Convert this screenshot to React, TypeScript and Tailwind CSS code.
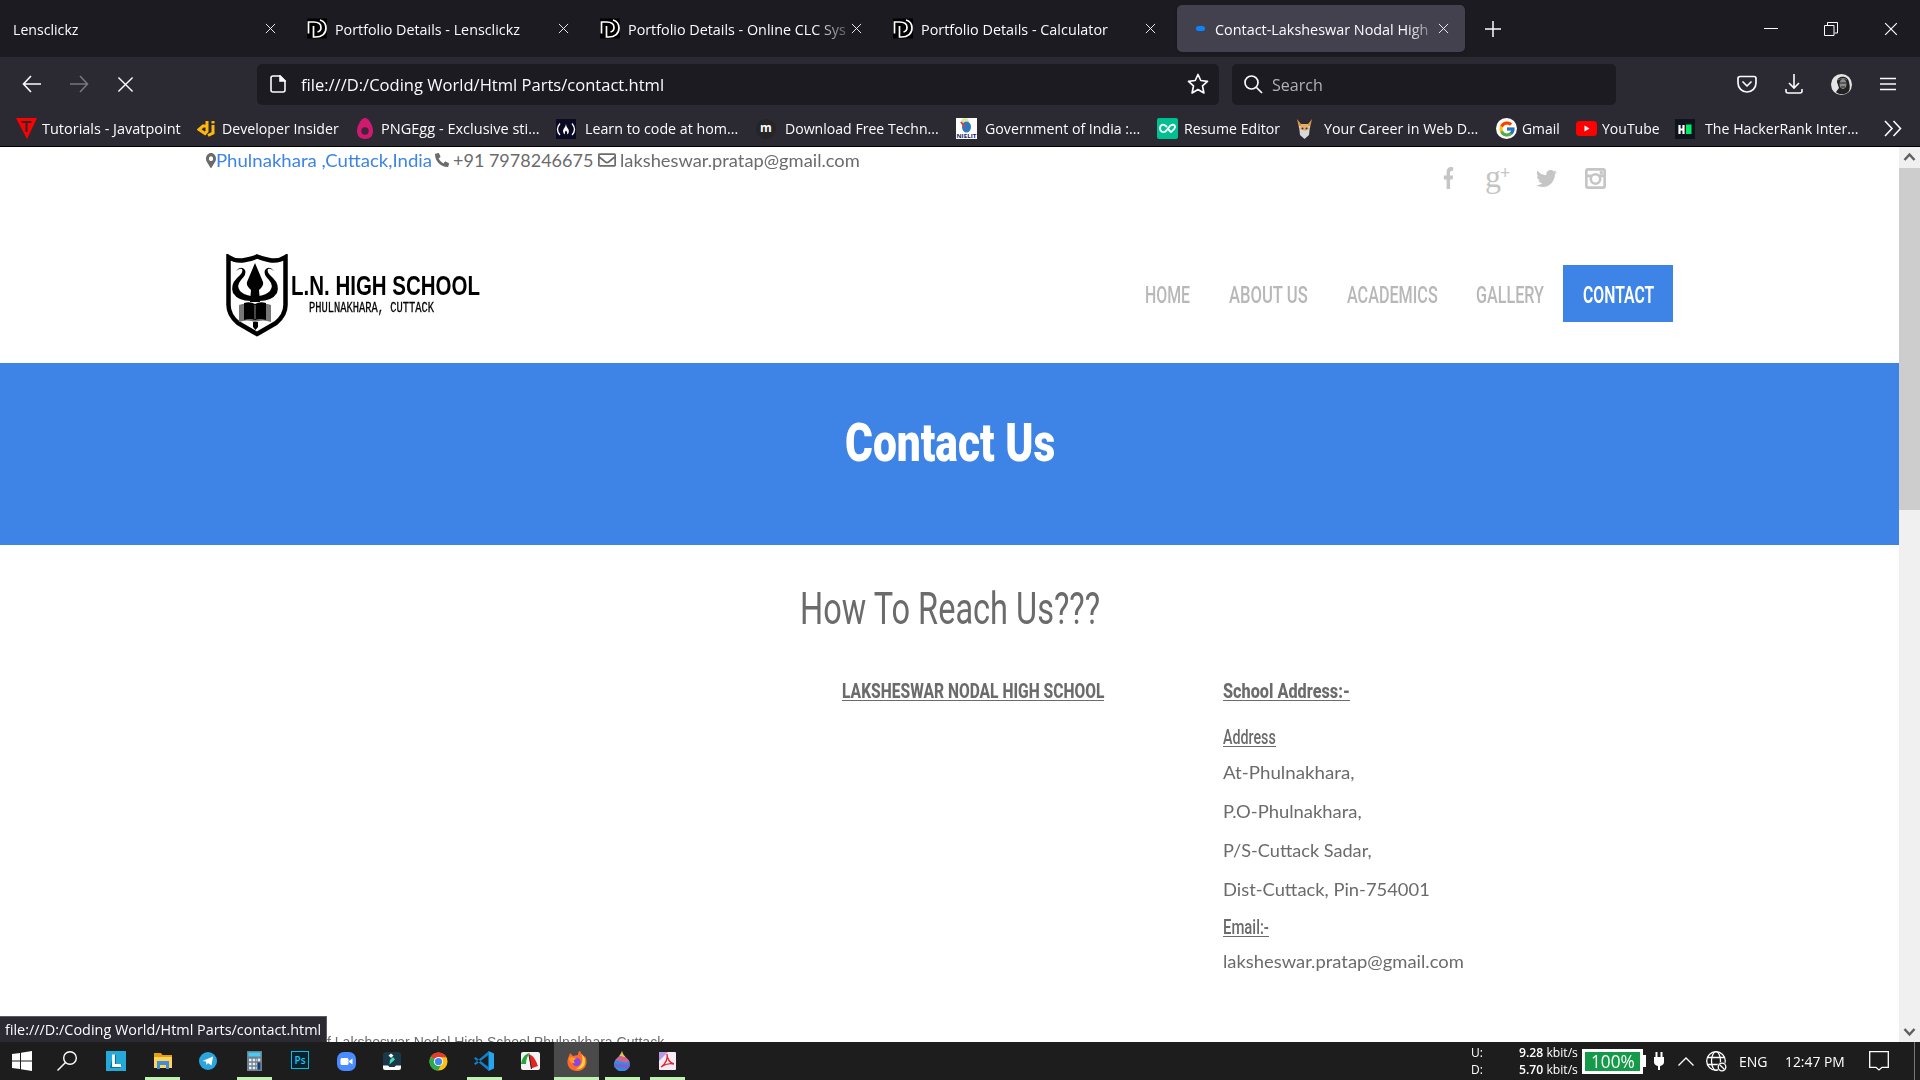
import React, { useLayoutEffect, useRef, useState } from "react";
import { FaMapMarkerAlt, FaPhoneAlt, FaRegEnvelope, FaFacebookF, FaTwitter } from "react-icons/fa";
import { FcGoogle } from "react-icons/fc";

/* Text squeezed or stretched horizontally to fill the width of its box. */
function Fit({ className, children }: { className: string; children: React.ReactNode }) {
  const outer = useRef<HTMLSpanElement>(null);
  const inner = useRef<HTMLSpanElement>(null);
  const [scale, setScale] = useState(1);
  useLayoutEffect(() => {
    if (outer.current && inner.current && inner.current.offsetWidth) {
      setScale(outer.current.clientWidth / inner.current.offsetWidth);
    }
  }, []);
  return (
    <span ref={outer} className={"block shrink-0 whitespace-nowrap " + className}>
      <span ref={inner} className="inline-block origin-left" style={{ transform: `scaleX(${scale})` }}>
        {children}
      </span>
    </span>
  );
}

type IconProps = { className?: string };

function Cross({ className }: IconProps) {
  return (
    <svg viewBox="0 0 12 12" className={"shrink-0 " + className} fill="none" stroke="currentColor">
      <path d="M1 1l10 10M11 1L1 11" />
    </svg>
  );
}

function PdIcon() {
  return (
    <svg viewBox="0 0 20 20" className="h-[21px] w-5 shrink-0" fill="none" stroke="#fff" strokeWidth="1.7">
      <rect width="20" height="20" fill="#000" stroke="none" />
      <path d="M1.500 15V3.500h5c5 0 7.500 2.300 7.500 5.500 0 2.500-1.500 4-3.500 4.500" />
      <path d="M6.500 7.500v11h2c6.500 0 10.500-3.500 10.500-9 0-4-2.500-7-6-8" />
    </svg>
  );
}

function TabStrip() {
  return (
    <div className="flex h-[57px] items-center bg-[#1c1b22] text-[#fbfbfe]">
      <div className="flex h-full w-[294px] items-center pl-[13px]">
        <Fit className="w-[65px] pt-px text-[15px]">Lensclickz</Fit>
        <Cross className="ml-[187px] h-[11px] w-[11px]" />
      </div>
      <div className="flex h-full w-[293px] items-center pl-[13px]">
        <PdIcon />
        <Fit className="ml-2 w-[185px] pt-px text-[15px]">Portfolio Details - Lensclickz</Fit>
        <Cross className="ml-[38px] h-[11px] w-[11px]" />
      </div>
      <div className="flex h-full w-[293px] items-center pl-[13px]">
        <PdIcon />
        <div className="ml-2 w-[218px] shrink-0 overflow-hidden [mask-image:linear-gradient(to_right,black_85%,transparent_106%)]">
          <Fit className="w-[218px] pt-px text-[15px]">Portfolio Details - Online CLC Sys</Fit>
        </div>
        <Cross className="ml-[5px] h-[11px] w-[11px]" />
      </div>
      <div className="flex h-full w-[297px] items-center pl-[13px]">
        <PdIcon />
        <Fit className="ml-2 w-[187px] pt-px text-[15px]">Portfolio Details - Calculator</Fit>
        <Cross className="ml-[37px] h-[11px] w-[11px]" />
      </div>
      <div className="flex h-[47px] w-[288px] items-center rounded-[5px] bg-[#42414d] pl-[19px] shadow">
        <span className="h-[5px] w-[9px] shrink-0 rounded-full bg-[#0a84ff]" />
        <div className="ml-[10px] w-[218px] shrink-0 overflow-hidden [mask-image:linear-gradient(to_right,black_88%,transparent_104%)]">
          <Fit className="w-[213px] pt-px text-[15px]">Contact-Laksheswar Nodal High</Fit>
        </div>
        <Cross className="ml-[5px] h-[11px] w-[11px]" />
      </div>
      <svg viewBox="0 0 16 16" className="ml-5 h-4 w-4" stroke="currentColor" strokeWidth="1.5">
        <path d="M8 0v16M0 8h16" />
      </svg>
      <svg viewBox="0 0 14 14" className="ml-[263px] h-[14px] w-[14px]" stroke="currentColor">
        <path d="M0 6.500h14" />
      </svg>
      <svg viewBox="0 0 14 14" className="ml-[46px] h-[14px] w-[14px]" stroke="currentColor" fill="none">
        <path d="M.5 3.500h9.500v10H.5zM3.500 3V.5h10V11H10.500" />
      </svg>
      <Cross className="ml-[46px] h-[14px] w-[14px]" />
    </div>
  );
}

function Toolbar() {
  return (
    <div className="flex h-[54px] items-center bg-[#2b2a33] pl-[22px] text-[#fbfbfe]">
      <svg viewBox="0 0 20 18" className="h-[18px] w-5" fill="none" stroke="currentColor" strokeWidth="1.6">
        <path d="M9 1L1.500 9 9 17M1.500 9H19" />
      </svg>
      <svg viewBox="0 0 20 18" className="ml-[27px] h-[18px] w-5 text-[#77767e]" fill="none" stroke="currentColor" strokeWidth="1.600">
        <path d="M11 1l7.500 8L11 17M18.500 9H1" />
      </svg>
      <Cross className="ml-[28px] h-[17px] w-[17px]" />
      <div className="ml-[123px] flex h-[41px] w-[962px] items-center rounded-[5px] bg-[#1c1b22] pl-[13px]">
        <svg viewBox="0 0 16 18" className="h-[18px] w-4" fill="none" stroke="currentColor" strokeWidth="1.600">
          <path d="M3 1h7l5 5v9a2 2 0 0 1-2 2H3a2 2 0 0 1-2-2V3a2 2 0 0 1 2-2z" />
          <path d="M10 1v5h5z" fill="currentColor" />
        </svg>
        <Fit className="ml-[15px] w-[363px] pt-0.5 text-[17px]">file:///D:/Coding World/Html Parts/contact.html</Fit>
        <svg viewBox="0 0 22 22" className="ml-[523px] h-[22px] w-[22px]" fill="none" stroke="currentColor" strokeWidth="1.700" strokeLinejoin="round">
          <path d="M11 1.500l2.800 6 6.700.8-5 4.500 1.400 7.200L11 16.500 5.100 20l1.400-7.200-5-4.500 6.700-.8z" />
        </svg>
      </div>
      <div className="ml-[13px] flex h-[41px] w-[384px] items-center rounded-[5px] bg-[#1c1b22] pl-3">
        <svg viewBox="0 0 19 19" className="h-[19px] w-[19px]" fill="none" stroke="currentColor" strokeWidth="1.700">
          <circle cx="7.500" cy="7.500" r="6.500" />
          <path d="M12.500 12.500L18 18" />
        </svg>
        <Fit className="ml-[9px] w-[51px] pt-0.5 text-[17px] text-[#b0b0b6]">Search</Fit>
      </div>
      <svg viewBox="0 0 20 18" className="ml-[121px] h-[18px] w-5" fill="none" stroke="currentColor" strokeWidth="1.700" strokeLinejoin="round" strokeLinecap="round">
        <path d="M3 1.500h14a2 2 0 0 1 2 2V8A9 9 0 0 1 1 8V3.500a2 2 0 0 1 2-2zM6 7l4 4 4-4" />
      </svg>
      <svg viewBox="0 0 18 20" className="ml-7 h-5 w-[18px]" fill="none" stroke="currentColor" strokeWidth="1.600">
        <path d="M9 0v14M4 9l5 5 5-5M1 15v2a2 2 0 0 0 2 2h12a2 2 0 0 0 2-2v-2" />
      </svg>
      <svg viewBox="0 0 21 21" className="ml-7 h-[21px] w-[21px]">
        <circle cx="10.500" cy="10.500" r="10.500" fill="#e4e4e4" />
        <path d="M6 8c0-7 11-7 12 0 1 4 1 6 0 9-3 4-8 4-12 2l-1-1 3-4z" fill="#222" />
        <ellipse cx="12" cy="10" rx="3.500" ry="5" fill="#8c8c8c" />
        <path d="M8.500 9h7M10 13h4" stroke="#222" />
        <path d="M7 6c3-2 7-2 9 0" stroke="#777" fill="none" />
      </svg>
      <svg viewBox="0 0 16 14" className="ml-7 h-[14px] w-4" stroke="currentColor" strokeWidth="1.600">
        <path d="M0 1.500h16M0 7h16M0 12.500h16" />
      </svg>
    </div>
  );
}

function Bookmarks() {
  return (
    <div className="flex h-9 items-center border-b border-black bg-[#2b2a33] pl-4 text-[15px] text-[#fbfbfe]">
      <svg viewBox="0 0 21 21" className="h-[21px] w-[21px] shrink-0">
        <path d="M0 0h21L11 21z" fill="#f00" />
        <path d="M5.500 4h10M10.500 4v10" stroke="#2b2a33" strokeWidth="2.200" />
      </svg>
      <Fit className="ml-[5px] w-[139px]">Tutorials - Javatpoint</Fit>
      <svg viewBox="0 0 18 16" className="ml-4 h-4 w-[18px] shrink-0" fill="none" stroke="#fdb90b" strokeWidth="3">
        <path d="M10 0v10.500l-2 2L2 8.500 6 5h4M16 4v8l-5 2.500M16 0v2.500" />
      </svg>
      <Fit className="ml-[7px] w-[117px]">Developer Insider</Fit>
      <svg viewBox="0 0 16 21" className="ml-[18px] h-[21px] w-4 shrink-0">
        <path d="M8 0c4 0 8 8 8 13s-3 8-8 8-8-3-8-8S4 0 8 0z" fill="#d0196f" />
        <circle cx="8" cy="13" r="3.700" fill="#43233c" />
      </svg>
      <Fit className="ml-2 w-[159px]">PNGEgg - Exclusive sti...</Fit>
      <svg viewBox="0 0 20 20" className="ml-4 h-5 w-5 shrink-0" fill="none" stroke="#fff" strokeWidth="1.300">
        <rect width="20" height="20" fill="#0a0a23" stroke="none" />
        <path d="M4 4.500q-5 6 0 11.500M16 4.500q5 6 0 11.500" />
        <path d="M10 4.500c0 4-3.500 5-2.800 8.500.3 1.500 1 2 1.800 2.500-.5-2 0-3 1-4 1 1 1.500 2 1 4 .8-.5 1.500-1 1.800-2.500.7-3.500-2.800-4-2.800-8.500z" fill="#fff" stroke="none" />
      </svg>
      <Fit className="ml-[9px] w-[153px]">Learn to code at hom...</Fit>
      <span className="ml-[18px] flex h-5 w-5 shrink-0 items-center justify-center rounded-full bg-[#252525] pb-0.5 text-[12px] font-bold">m</span>
      <Fit className="ml-[9px] w-[154px]">Download Free Techn...</Fit>
      <svg viewBox="0 0 21 21" className="ml-[17px] h-[21px] w-[21px] shrink-0">
        <rect width="21" height="21" fill="#fff" />
        <circle cx="9" cy="4" r="4" fill="#dfe8a0" />
        <ellipse cx="10.500" cy="9" rx="4.500" ry="5.500" fill="#2d79bf" />
        <path d="M5 4l4 5" stroke="#e33a51" strokeWidth="2" />
        <text x="0.500" y="20" fontSize="6" fontWeight="700" fill="#12206e" textLength="20" lengthAdjust="spacingAndGlyphs">NIELIT</text>
      </svg>
      <Fit className="ml-2 w-[155px]">Government of India :...</Fit>
      <svg viewBox="0 0 21 21" className="ml-[17px] h-[21px] w-[21px] shrink-0" fill="none" stroke="#fff" strokeWidth="1.900" strokeLinecap="round" strokeLinejoin="round">
        <rect width="21" height="21" rx="2" fill="#00c091" stroke="none" />
        <path d="M9.500 8.500C6 5 3 7 3 10.300s3 5 6 2.700l4-5c2-2 5-1.500 5 .7 0 2-3 4.500-4 5.300-1-.8-2-1.800-2.500-2.700" />
      </svg>
      <Fit className="ml-1.5 w-[96px]">Resume Editor</Fit>
      <svg viewBox="0 0 15 20" className="ml-[17px] h-5 w-[15px] shrink-0">
        <path d="M0 0l4 5h7l4-5-2 9H2z" fill="#d79745" />
        <path d="M2 7h11l-1 9-4.500 4L3 16z" fill="#d8d8d8" />
        <path d="M4 5h7l1 5-4 2-5-2z" fill="#e6ad68" />
        <circle cx="5.500" cy="9.500" r="1" fill="#333" />
        <circle cx="9.500" cy="9.500" r="1" fill="#333" />
      </svg>
      <Fit className="ml-3 w-[154px]">Your Career in Web D...</Fit>
      <span className="ml-[18px] flex h-[21px] w-[21px] shrink-0 items-center justify-center rounded-full bg-white">
        <FcGoogle className="h-[18px] w-[18px]" />
      </span>
      <Fit className="ml-[5px] w-[38px]">Gmail</Fit>
      <svg viewBox="0 0 21 15" className="ml-4 h-[15px] w-[21px] shrink-0">
        <rect width="21" height="15" rx="3.500" fill="#f00" />
        <path d="M8.500 4.500v6l5-3z" fill="#fff" />
      </svg>
      <Fit className="ml-[5px] w-[58px]">YouTube</Fit>
      <svg viewBox="0 0 20 20" className="ml-[15px] h-5 w-5 shrink-0">
        <rect width="20" height="20" fill="#0e141e" />
        <path d="M4.500 6v9M8.500 6v9M4 10.500h5" stroke="#fff" strokeWidth="2.200" />
        <rect x="11" y="5.500" width="5.500" height="9.500" fill="#00ea64" />
      </svg>
      <Fit className="ml-[10px] w-[153px]">The HackerRank Inter...</Fit>
      <svg viewBox="0 0 18 17" className="ml-[26px] h-[17px] w-[18px] shrink-0" fill="none" stroke="currentColor" strokeWidth="1.600">
        <path d="M1 1l7 7.500L1 16M9.500 1l7 7.500-7 7.500" />
      </svg>
    </div>
  );
}

function SchoolLogo() {
  return (
    <div className="flex h-[83px] items-start">
      <svg viewBox="0 0 62 83" className="h-[83px] w-[62px]">
        <path d="M2.500 3Q10 8 19 6 27 4.500 31 2.500 36 4.500 43 6 52 8 59.500 3V51Q59.500 61 50 69 38 76 31 80 24 76 12 69 2.500 61 2.500 51Z" fill="#fff" stroke="#000" strokeWidth="4.500" />
        <path d="M29 9l8 19q1 4-4 8l1 12h-10l1-12q-5-4-4-8z" />
        <path d="M10 17q5-6 9-1 2 4-4 10-5 6-1 11 4 4 11 5v5q-13 0-18-8-3-8 4-15 7-6 5-9-2-1-6 2z" />
        <path d="M48 17q-5-6-9-1-2 4 4 10 5 6 1 11-4 4-11 5v5q13 0 18-8 3-8-4-15-7-6-5-9 2-1 6 2z" />
        <path d="M13 51q8-3 16 1 8-4 16-1v17q-8-3-16 0-8-3-16 0z" fill="#777" />
        <path d="M18 49q6-2 11 1 5-3 11-1v17q-6-2-11 0-5-2-11 0zM27 68h5v5l-2.500 3-2.500-3z" />
        <path d="M29 51v14" stroke="#888" />
      </svg>
      <div className="ml-[3px] mt-[18px]">
        <Fit className="w-[189px] font-['Liberation_Sans'] text-[27px] font-bold leading-[29px] text-black">L.N. HIGH SCHOOL</Fit>
        <Fit className="ml-[18px] w-[125px] font-['Liberation_Mono'] text-[14px] leading-[15px] text-black [-webkit-text-stroke:0.3px_black]">PHULNAKHARA, CUTTACK</Fit>
      </div>
    </div>
  );
}

function PageHeader() {
  return (
    <header className="h-[216px] shrink-0">
      <div className="flex h-[60px] items-start pl-[206px] text-[#6b6b6b]">
        <div className="flex h-[26px] w-[1237px] items-center text-[18px]">
          <FaMapMarkerAlt className="h-[15px] w-[10px] shrink-0" preserveAspectRatio="none" />
          <Fit className="w-[216px] text-[#3e84e6]">Phulnakhara ,Cuttack,India</Fit>
          <FaPhoneAlt className="ml-[3px] h-[14px] w-[14px] shrink-0 rotate-0" />
          <Fit className="ml-1 w-[140px]">+91 7978246675</Fit>
          <FaRegEnvelope className="ml-[5px] h-[18px] w-[18px] shrink-0" />
          <Fit className="ml-1 w-[240px]">laksheswar.pratap@gmail.com</Fit>
        </div>
        <div className="flex h-[62px] items-center text-[#c5c5c5]">
          <FaFacebookF className="h-[22px] w-[11px]" preserveAspectRatio="none" />
          <span className="ml-[31px] flex h-[34px] w-[23px] font-['Liberation_Serif'] font-bold">
            <span className="text-[32px] font-normal leading-[31px]">g</span>
            <span className="-ml-px text-[18px] leading-[24px]">+</span>
          </span>
          <FaTwitter className="ml-7 h-[21px] w-[21px]" />
          <svg viewBox="0 0 20 20" className="ml-7 h-[21px] w-[21px]" fill="none" stroke="currentColor" strokeWidth="2.500">
            <rect x="1.300" y="1.300" width="17.400" height="17.400" rx="1.500" />
            <circle cx="10" cy="10.500" r="4.500" />
            <path d="M2 7.500h4M14 7.500h4" />
            <path d="M14 4.500h3" strokeWidth="3" />
          </svg>
        </div>
      </div>
      <div className="flex h-[156px] items-start pl-[226px] pt-[47px]">
        <div className="w-[919px]"><SchoolLogo /></div>
        <nav className="mt-[11px] flex h-[57px] items-center font-[Roboto] text-[24px] font-medium text-[#b8b8b8]">
          <Fit className="w-[45px] pt-0.5">HOME</Fit>
          <Fit className="ml-[39px] w-[79px] pt-0.5">ABOUT US</Fit>
          <Fit className="ml-[39px] w-[91px] pt-0.5">ACADEMICS</Fit>
          <Fit className="ml-[38px] w-[68px] pt-0.5">GALLERY</Fit>
          <div className="ml-[19px] flex h-[57px] w-[110px] items-center justify-center bg-[#3e84e6]">
            <Fit className="w-[71px] pt-0.5 font-semibold text-white">CONTACT</Fit>
          </div>
        </nav>
      </div>
    </header>
  );
}

function Page() {
  return (
    <div className="flex h-[895px] overflow-hidden bg-white">
      <main className="flex w-[1899px] flex-col font-[Lato] text-[#6b6b6b]">
        <PageHeader />
        <section className="flex h-[182px] shrink-0 justify-center bg-[#3e84e6] pt-[46px]">
          <Fit className="h-[68px] w-[210px] font-[Roboto] text-[53px] font-black leading-[68px] text-white">Contact Us</Fit>
        </section>
        <section className="flex h-[126px] shrink-0 justify-center pt-[35px]">
          <Fit className="h-[58px] w-[300px] font-[Roboto] text-[45px] font-[450] leading-[58px]">How To Reach Us???</Fit>
        </section>
        <section className="flex h-[345px] shrink-0 pl-[842px] pt-2">
          <div className="w-[381px]">
            <Fit className="h-[22px] w-[262px] border-b border-[#6b6b6b] font-[Roboto] text-[21px] font-extrabold leading-[24px]">LAKSHESWAR NODAL HIGH SCHOOL</Fit>
          </div>
          <div className="text-[18px]">
            <Fit className="h-[22px] w-[127px] border-b border-[#6b6b6b] font-[Roboto] text-[21px] font-extrabold leading-[24px]">School Address:-</Fit>
            <Fit className="mt-6 h-[22px] w-[53px] border-b border-[#6b6b6b] font-[Roboto] text-[21px] font-medium leading-[24px]">Address</Fit>
            <Fit className="mt-[6px] h-[39px] w-[131px] leading-[39px]">At-Phulnakhara,</Fit>
            <Fit className="h-[39px] w-[139px] leading-[39px]">P.O-Phulnakhara,</Fit>
            <Fit className="h-[39px] w-[149px] leading-[39px]">P/S-Cuttack Sadar,</Fit>
            <Fit className="h-[39px] w-[207px] leading-[39px]">Dist-Cuttack, Pin-754001</Fit>
            <Fit className="mt-[6px] h-[22px] w-[46px] border-b border-[#6b6b6b] font-[Roboto] text-[21px] font-medium leading-[24px]">Email:-</Fit>
            <Fit className="mt-[5px] h-[39px] w-[241px] leading-[39px]">laksheswar.pratap@gmail.com</Fit>
          </div>
        </section>
        <footer className="flex h-[26px] shrink-0">
          <div className="flex h-[26px] w-[327px] items-center border-r border-t border-[#5b5b62] bg-[#2b2a33] pl-[5px] font-['Open_Sans'] text-[#fbfbfe]">
            <Fit className="w-[316px] text-[15px]">file:///D:/Coding World/Html Parts/contact.html</Fit>
          </div>
          <Fit className="h-[26px] w-[337px] overflow-hidden pt-4 font-['Liberation_Sans'] text-[14px] leading-[20px]">f Laksheswar Nodal High School Phulnakhara Cuttack</Fit>
        </footer>
      </main>
      <div className="flex w-[21px] flex-col items-center bg-[#f0f0f0] text-[#606060]">
        <svg viewBox="0 0 21 21" className="h-[21px] w-[21px]" fill="none" stroke="currentColor" strokeWidth="2.500">
          <path d="M5.500 13l5-5.500 5 5.500" />
        </svg>
        <div className="h-[342px] w-full bg-[#cdcdcd]" />
        <svg viewBox="0 0 21 21" className="mt-auto h-[21px] w-[21px]" fill="none" stroke="currentColor" strokeWidth="2.500">
          <path d="M5.500 8l5 5.500 5-5.500" />
        </svg>
      </div>
    </div>
  );
}

function TaskButton({ w, mark, active, children }: { w: string; mark?: string; active?: boolean; children: React.ReactNode }) {
  return (
    <div className={"flex h-[38px] shrink-0 flex-col items-center " + w + (active ? " bg-[#4a4a4a]" : "")}>
      <div className="flex h-[35px] items-center pt-[3px]">{children}</div>
      {mark && <div className={"h-[3px] bg-[#bdf5b0] " + mark} />}
    </div>
  );
}

function Taskbar() {
  return (
    <div className="flex h-[38px] items-center bg-[#1d1d1d] text-white">
      <TaskButton w="w-[44px]">
        <svg viewBox="0 0 20 20" className="h-5 w-5" fill="#fff"><path d="M0 3l8-1v7.500H0zM9 1.800L20 0v9.500H9zM0 10.500h8V18l-8-1zM9 10.500h11V20L9 18.200z" /></svg>
      </TaskButton>
      <TaskButton w="w-[46px]">
        <svg viewBox="0 0 20 20" className="h-5 w-5" fill="none" stroke="#fff" strokeWidth="1.400"><circle cx="13" cy="7" r="6.300" /><path d="M8.500 11.500L.5 19.500" /></svg>
      </TaskButton>
      <TaskButton w="w-[52px]">
        <svg viewBox="0 0 20 20" className="h-5 w-5"><rect width="20" height="20" fill="#25a9d9" /><path d="M4 17L7 4h3v9h6l-2 4z" fill="#0f6f9c" /><path d="M7.500 3.500v11H15" fill="none" stroke="#fff" strokeWidth="2.800" /></svg>
      </TaskButton>
      <TaskButton w="w-[41px]" mark="w-[35px]">
        <svg viewBox="0 0 18 16" className="h-4 w-[18px]"><path d="M0 0h7l1.500 2H18v12H0z" fill="#e5a00d" /><path d="M0 4h18v11H0z" fill="#ffd35c" /><path d="M3 16V8h12v8h-3v-4H6v4z" fill="#3d8edb" /></svg>
      </TaskButton>
      <TaskButton w="w-[50px]">
        <svg viewBox="0 0 18 18" className="h-[18px] w-[18px]"><circle cx="9" cy="9" r="9" fill="#2ba5df" /><path d="M3.500 9L14 4.500 12.500 13.500 9 11l-1.500 2-.5-3.500z" fill="#fff" /></svg>
      </TaskButton>
      <TaskButton w="w-[42px]" mark="w-[35px]">
        <svg viewBox="0 0 15 20" className="h-5 w-[15px]"><rect width="15" height="20" fill="#6f7f8d" /><rect x="1.500" y="1.500" width="12" height="4" fill="#45cdf5" /><path d="M2 9h8M2 13h8M2 17h8" stroke="#e8eef2" strokeWidth="2.500" strokeDasharray="2.500 1.200" /><path d="M12 7.500v2.800" stroke="#e8eef2" strokeWidth="2.500" /><path d="M12 11.500v7" stroke="#123e78" strokeWidth="2.500" /></svg>
      </TaskButton>
      <TaskButton w="w-[50px]">
        <span className="mb-[2px] flex h-[18px] w-[18px] items-center justify-center border border-[#0cbce6] bg-[#06232f] text-[10px] font-semibold leading-none text-[#12c7f5]">Ps</span>
      </TaskButton>
      <TaskButton w="w-[42px]">
        <svg viewBox="0 0 19 19" className="h-[19px] w-[19px]"><rect width="19" height="19" rx="7" fill="#4a8cff" /><rect x="3.500" y="6" width="8" height="7" rx="1.500" fill="#fff" /><path d="M12 9l3.500-2.500v6L12 10z" fill="#fff" /></svg>
      </TaskButton>
      <TaskButton w="w-[50px]">
        <svg viewBox="0 0 18 18" className="h-[18px] w-[18px]"><rect width="18" height="17" rx="3" fill="#19394a" /><path d="M5.500 3.500L8 1.500l2.500 2L8 6z" fill="#fff" /><path d="M7 8l3-3 2 2.500-5.500 5z" fill="#3fdcb8" /><path d="M0 13.500h5l1.500 1.500h5l1.500-1.500h5V16a2 2 0 0 1-2 2H2a2 2 0 0 1-2-2z" fill="#fff" /></svg>
      </TaskButton>
      <TaskButton w="w-[42px]">
        <svg viewBox="0 0 20 20" className="h-[19px] w-[19px]"><circle cx="10" cy="10" r="9.500" fill="#fbc116" /><path d="M10 10L1.800 5.200A9.500 9.500 0 0 1 18.300 5.500H10z" fill="#e33b2e" /><path d="M1.800 5.200A9.500 9.500 0 0 0 9.500 19.500l4-7.500L10 10z" fill="#2da94f" /><circle cx="10" cy="10" r="4.800" fill="#fff" /><circle cx="10" cy="10" r="3.800" fill="#4285f4" /></svg>
      </TaskButton>
      <TaskButton w="w-[50px]" mark="w-[35px]">
        <svg viewBox="0 0 20 20" className="h-5 w-5"><path d="M14.500 0L20 2.500v15L14.500 20z" fill="#24a7f2" /><path d="M1.500 6L15 16.500V20L0 7.500zM1.500 14L15 3.500V0L0 12.500z" fill="#1180cb" /></svg>
      </TaskButton>
      <TaskButton w="w-[42px]">
        <svg viewBox="0 0 19 18" className="h-[18px] w-[19px]"><rect width="19" height="18" rx="2" fill="#f4f4f4" /><path d="M8 2c5 2 7 7 9 12l-7 2.500z" fill="#e52421" /><path d="M9 1C3 2 1 7 0 12h5c0-4 1-8 4-11z" fill="#29a43a" /><path d="M8 3l2.500 14" stroke="#222" /></svg>
      </TaskButton>
      <TaskButton w="w-[3px]">{null}</TaskButton>
      <TaskButton w="w-[45px]" mark="w-[45px]" active>
        <svg viewBox="0 0 20 20" className="h-5 w-5"><path d="M2 5l1-3 3 3 5-1c0-3 1-4 2-4 0 3 3 3 4 6l1-1c4 7 0 15-8 15S-2 13 2 5z" fill="#ff6a2b" /><path d="M13 0c0 3 6 5 5 11 0 5-5 8-9 7 6-3 9-10 4-18z" fill="#ffd43a" /><circle cx="9.500" cy="11" r="4.300" fill="#8a45e6" /><path d="M2 7c3-2 6 0 8 1-3 0-4 2-2 4-4 1-6-1-6-5z" fill="#ff9a27" /></svg>
      </TaskButton>
      <TaskButton w="w-[46px]" mark="w-[35px]">
        <svg viewBox="0 0 16 20" className="h-5 w-4"><path d="M8 0c1 6 8 8 8 13a7.500 7 0 0 1-16 0C0 8 6 6 8 0z" fill="#2d8fe0" /><path d="M8 0c-.5 2-1.500 3.500-2.500 5L12 6.500C10 4.500 8.500 3 8 0z" fill="#f7c52b" /><path d="M5.500 5C4 6.500 2 8 1 10c4-1 8 3 14.500 1-.5-2-2-3-3.500-4.500z" fill="#d95f93" /><path d="M0 14c4-3 9 2 16-1 0 2-1 3.500-2 4.500-5 1-9-2-13.500-1z" fill="#7a5fd0" /></svg>
      </TaskButton>
      <TaskButton w="w-[45px]" mark="w-[35px]">
        <svg viewBox="0 0 17 18" className="h-[18px] w-[17px]"><rect width="17" height="18" rx="1" fill="#f6ecf8" /><path d="M0 0h9L0 9z" fill="#b79be0" /><path d="M2 15C7 12 9 6 8 2c0 5 3 9 7 10-4-1-9 0-13 3z" fill="none" stroke="#e3262d" strokeWidth="1.300" /></svg>
      </TaskButton>
      <div className="ml-auto flex items-center text-[13px] leading-[17px]">
        <div><Fit className="w-[12px]">U:</Fit><Fit className="w-[12px]">D:</Fit></div>
        <div className="ml-9 flex flex-col items-end font-medium">
          <Fit className="w-[59px]"><b className="font-semibold">9.28</b> kbit/s</Fit>
          <Fit className="w-[59px]"><b className="font-semibold">5.70</b> kbit/s</Fit>
        </div>
        <div className="ml-[4px] flex h-[25px] w-[61px] items-center justify-center border-[3px] border-white bg-[#149a48]">
          <Fit className="w-[44px] text-[18px]">100%</Fit>
        </div>
        <span className="h-3 w-[3px] bg-white" />
        <svg viewBox="0 0 10 18" className="ml-2 h-[18px] w-[10px]" fill="#fff"><path d="M1.500 0h2v5h3V0h2v5H10v5q0 3-4 4v4H4v-4q-4-1-4-4V5h1.500z" /></svg>
        <svg viewBox="0 0 16 9" className="ml-[14px] h-[9px] w-4" fill="none" stroke="#fff" strokeWidth="1.300"><path d="M.5 8.500L8 1l7.500 7.500" /></svg>
        <svg viewBox="0 0 21 21" className="ml-3 h-[21px] w-[21px]" fill="none" stroke="#fff" strokeWidth="1.300">
          <circle cx="10" cy="10" r="9.300" /><ellipse cx="10" cy="10" rx="4.500" ry="9.300" /><path d="M1.500 6.500h17M1 13.500h12" />
          <circle cx="16" cy="16" r="5" fill="#1d1d1d" stroke="none" /><circle cx="16" cy="16" r="3.800" /><path d="M13.500 13.500l5 5" />
        </svg>
        <Fit className="ml-3 w-[29px] text-[15px]">ENG</Fit>
        <Fit className="ml-[17px] w-[60px] text-[15px]">12:47 PM</Fit>
        <svg viewBox="0 0 20 20" className="ml-6 h-5 w-5" fill="none" stroke="#fff" strokeWidth="1.300"><path d="M.7.7h18.600v15.600H13L10 19l-3-2.700H.7z" /></svg>
        <span className="ml-[25px] mr-[5px] h-[38px] w-px bg-[#777]" />
      </div>
    </div>
  );
}

export default function App() {
  return (
    <div className="h-[1080px] w-[1920px] overflow-hidden font-['Open_Sans',sans-serif]">
      <TabStrip />
      <Toolbar />
      <Bookmarks />
      <Page />
      <Taskbar />
    </div>
  );
}
